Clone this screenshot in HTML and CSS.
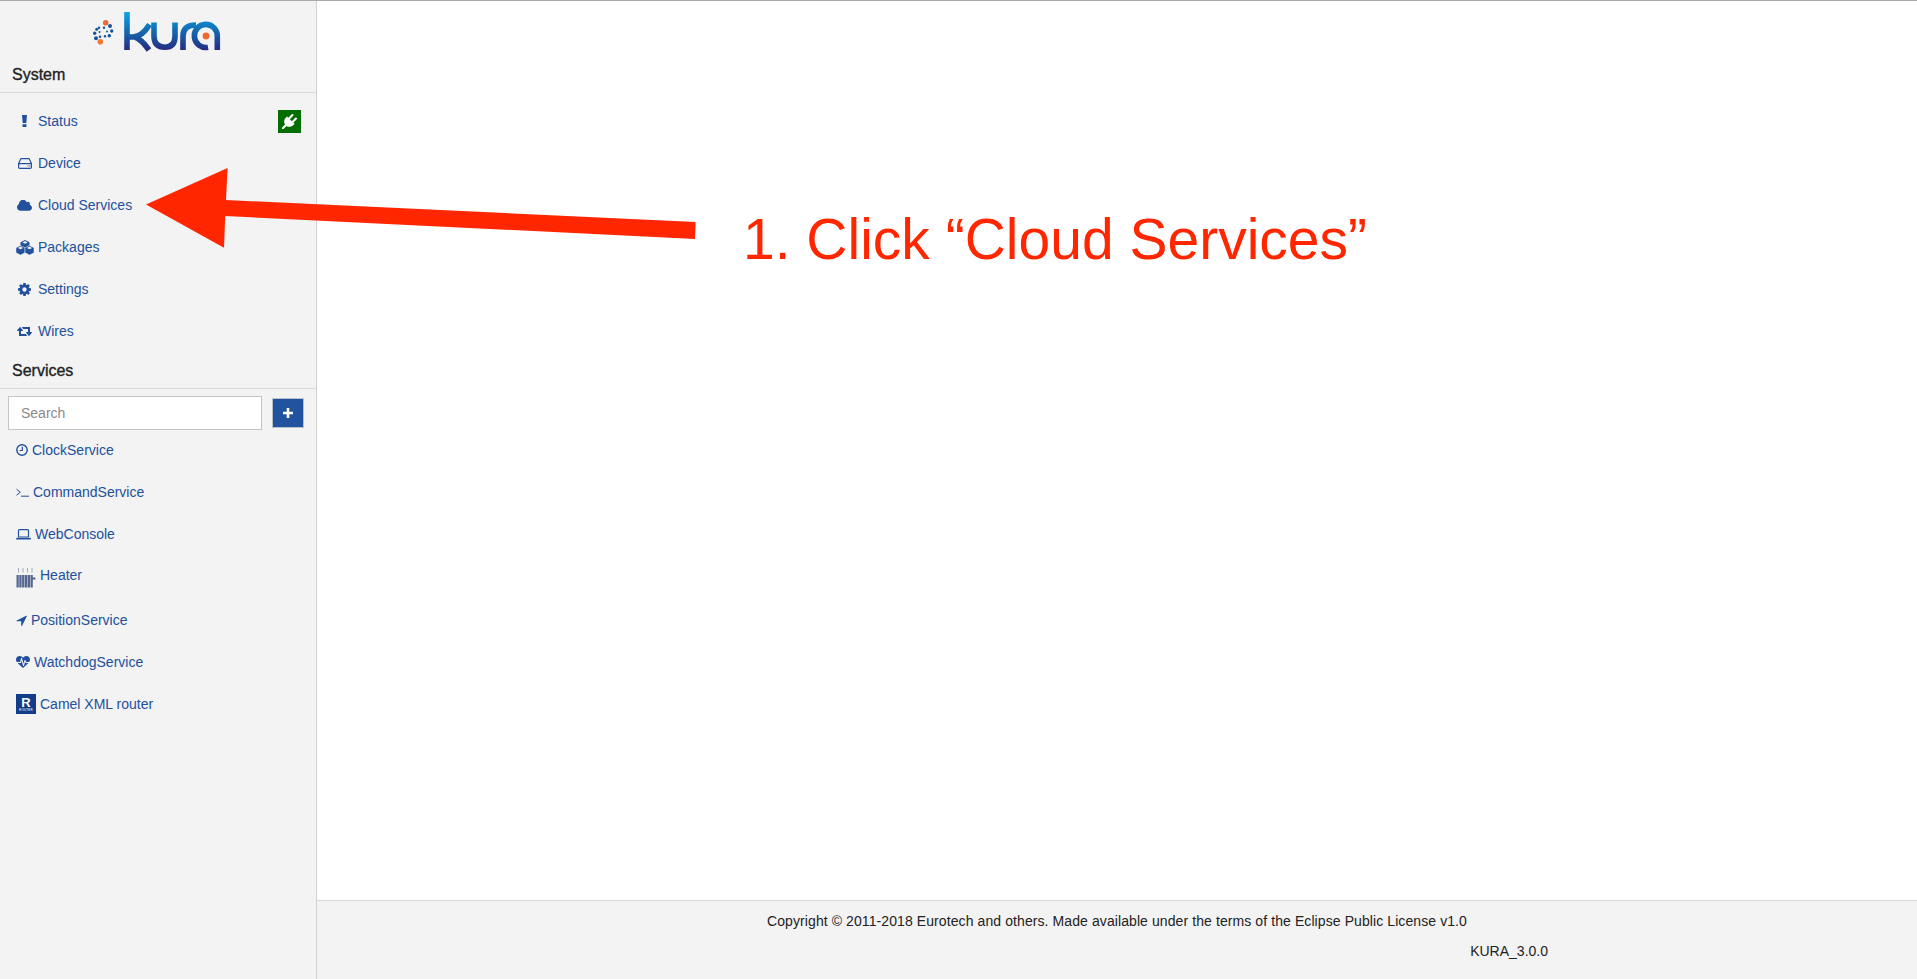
FILE: index.html
```html
<!DOCTYPE html>
<html lang="en">
<head>
<meta charset="utf-8">
<title>Kura</title>
<link rel="stylesheet" href="styles.css">
</head>
<body>
<div class="app">
  <aside class="sidebar">
    <div class="logo">
      <svg class="logo-svg" width="134" height="42" viewBox="90 10 134 42" role="img" aria-label="Kura">
        <defs>
          <linearGradient id="kg" gradientUnits="userSpaceOnUse" x1="0" y1="12" x2="0" y2="50">
            <stop offset="0" stop-color="#0aa5e6"/>
            <stop offset="0.45" stop-color="#136fb6"/>
            <stop offset="1" stop-color="#252c80"/>
          </linearGradient>
        </defs>
        <g fill="none" stroke="url(#kg)" stroke-width="5.6">
          <path d="M127 12V50"/>
          <path d="M128 37H133Q142 37 149.500 24.500"/>
          <path d="M135 37Q141 39 149 50"/>
          <path d="M154 22.500V36Q154 47.200 165 47.200Q175 47.200 175 36V22.500"/>
          <path d="M183 50V36Q183 25 196 25"/>
          <path d="M208 47.200A11.500 11.500 0 1 1 217.300 36.500V50"/>
        </g>
        <circle cx="206" cy="36" r="3.400" fill="#ef6a2a"/>
        <circle cx="105.700" cy="22.700" r="2.800" fill="#ee6a33"/>
        <circle cx="100.300" cy="41.700" r="2.800" fill="#f0792f"/>
        <g fill="#14549f">
          <circle cx="110" cy="26" r="2"/><circle cx="111.700" cy="31" r="1.700"/><circle cx="109.300" cy="35.700" r="1.700"/>
          <circle cx="104" cy="27.700" r="1.200"/><circle cx="99" cy="27.700" r="1.200"/><circle cx="96.700" cy="29.300" r="1.500"/>
          <circle cx="94.700" cy="33.300" r="1.700"/><circle cx="96" cy="38.300" r="2"/><circle cx="100" cy="36.700" r="1.300"/>
          <circle cx="105" cy="36.300" r="1.200"/><circle cx="107" cy="31.500" r="1"/><circle cx="99.500" cy="32" r="1"/>
        </g>
      </svg>
    </div>
    <h2 class="section-head">System</h2>
    <nav class="system-nav">
      <a class="nav-row" href="#">
        <span class="nav-icon"><svg class="ico" width="5" height="12" viewBox="0 0 5 12"><path d="M0 0H5L4.300 8H.7ZM.5 9.300H4.500V12H.5Z"/></svg></span>
        <span>Status</span>
        <span class="badge"><svg class="plug" width="15" height="15" viewBox="0 0 1792 1792"><path d="M1755 453q37 38 37 90.500t-37 90.500l-401 400 150 150-160 160q-163 163-389.500 186.500t-411.500-100.500l-362 362h-181v-181l362-362q-124-185-100.500-411.500t186.500-389.500l160-160 150 150 400-401q38-37 91-37t90 37 37 90.500-37 90.500l-400 401 234 234 401-400q38-37 91-37t90 37z"/></svg></span>
      </a>
      <a class="nav-row" href="#">
        <span class="nav-icon"><svg class="ico-line" width="14" height="11" viewBox="0 0 14 11"><path d="M3 .6H11L13.400 5.500V9.200Q13.400 10.400 12.200 10.400H1.800Q.6 10.400 .6 9.200V5.500ZM.6 5.600H13.400"/><path class="dots" d="M9.500 8H10.500M11.300 8H12.300"/></svg></span>
        <span>Device</span>
      </a>
      <a class="nav-row" href="#">
        <span class="nav-icon"><svg class="ico" width="15" height="11" viewBox="0 128 1920 1344"><path d="M1920 1088q0 159-112.500 271.500t-271.500 112.500h-1088q-185 0-316.500-131.500t-131.500-316.500q0-132 71-241.500t187-163.500q-2-28-2-43 0-212 150-362t362-150q158 0 286.500 88t187.500 230q70-62 166-62 106 0 181 75t75 181q0 75-41 138 129 30 213 134.500t84 239.500z"/></svg></span>
        <span>Cloud Services</span>
      </a>
      <a class="nav-row" href="#">
        <span class="nav-icon"><svg class="ico cubes" width="18" height="15" viewBox="0 0 18 15"><path d="M9 0L13.500 2.200V7.200L9 9.500L4.500 7.200V2.200Z"/><path class="cube" d="M4.500 5.500L9 7.700V12.700L4.500 15L0 12.700V7.700Z"/><path class="cube" d="M13.500 5.500L18 7.700V12.700L13.500 15L9 12.700V7.700Z"/><path class="cut" d="M9 1.100L11.600 2.400L9 3.700L6.400 2.400ZM4.500 6.600L7.100 7.900L4.500 9.200L1.900 7.900ZM13.500 6.600L16.100 7.900L13.500 9.200L10.900 7.900Z"/></svg></span>
        <span>Packages</span>
      </a>
      <a class="nav-row" href="#">
        <span class="nav-icon"><svg class="ico" width="13" height="13" viewBox="0 128 1536 1536"><path d="M1024 896q0-106-75-181t-181-75-181 75-75 181 75 181 181 75 181-75 75-181zm512-109v222q0 12-8 23t-20 13l-185 28q-19 54-39 91 35 50 107 138 10 12 10 25t-9 23q-27 37-99 108t-94 71q-12 0-26-9l-138-108q-44 23-91 38-16 136-29 186-7 28-36 28h-222q-14 0-24.500-8.500t-11.500-21.500l-28-184q-49-16-90-37l-141 107q-10 9-25 9-14 0-25-11-126-114-165-168-7-10-7-23 0-12 8-23 15-21 51-66.500t54-70.500q-27-50-41-99l-183-27q-13-2-21-12.500t-8-23.500v-222q0-12 8-23t19-13l186-28q14-46 39-92-40-57-107-138-10-12-10-24 0-10 9-23 26-36 98.500-107.500t94.500-71.500q13 0 26 10l138 107q44-23 91-38 16-136 29-186 7-28 36-28h222q14 0 24.500 8.500t11.500 21.500l28 184q49 16 90 37l142-107q9-9 24-9 13 0 25 10 129 119 165 170 7 8 7 22 0 12-8 23-15 21-51 66.500t-54 70.500q26 50 41 98l183 28q13 2 21 12.500t8 23.500z"/></svg></span>
        <span>Settings</span>
      </a>
      <a class="nav-row" href="#">
        <span class="nav-icon"><svg class="ico" width="15" height="10" viewBox="0 256 1920 1280"><path d="M1280 1504q0 13-9.500 22.500t-22.500 9.500h-960q-8 0-13.500-2t-9-7-5.500-8-3-11.500-1-11.500v-600h-192q-26 0-45-19t-19-45q0-24 15-41l320-384q19-22 49-22t49 22l320 384q15 17 15 41 0 26-19 45t-45 19h-192v384h576q16 0 25 11l160 192q7 10 7 21zm640-416q0 24-15 41l-320 384q-20 23-49 23t-49-23l-320-384q-15-17-15-41 0-26 19-45t45-19h192v-384h-576q-16 0-25-12l-160-192q-7-9-7-20 0-13 9.500-22.500t22.500-9.500h960q8 0 13.500 2t9 7 5.500 8 3 11.500 1 11.500v600h192q26 0 45 19t19 45z"/></svg></span>
        <span>Wires</span>
      </a>
    </nav>
    <h2 class="section-head">Services</h2>
    <div class="search-row">
      <input class="search" type="text" placeholder="Search">
      <button class="add" type="button" aria-label="Add"><svg class="add-icon" width="10" height="10" viewBox="0 0 10 10"><path d="M3.700 0H6.300V3.700H10V6.300H6.300V10H3.700V6.300H0V3.700H3.700Z"/></svg></button>
    </div>
    <nav class="service-nav">
      <a class="service-row" href="#">
        <svg class="ico-line" width="12" height="12" viewBox="0 0 12 12"><circle cx="6" cy="6" r="5.200" stroke-width="1.400"/><path d="M6.300 2.800V6.500H3.500" stroke-width="1.200"/></svg>
        <span>ClockService</span>
      </a>
      <a class="service-row" href="#">
        <svg class="ico-line" width="13" height="10" viewBox="0 0 13 10"><path d="M.5 2.200L4.300 5.200L.5 8.200M5 9.200H13" stroke-width="1"/></svg>
        <span>CommandService</span>
      </a>
      <a class="service-row" href="#">
        <svg class="ico-line" width="15" height="11" viewBox="0 0 15 11"><path d="M2.500 8V1.600Q2.500 .7 3.400 .7H11.600Q12.500 .7 12.500 1.600V8Z"/><path d="M.2 9.700H14.800" stroke-width="1.600"/></svg>
        <span>WebConsole</span>
      </a>
      <a class="service-row tall" href="#">
        <svg class="heater" width="20" height="20" viewBox="0 0 20 20"><path class="steam" d="M2.500 0V4.500M7 0V4.500M11.500 0V4.500M16 0V4.500"/><path d="M.5 7H2.800V19.500H.5ZM3.300 7H5.600V19.500H3.300ZM6.100 7H8.400V19.500H6.100ZM8.900 7H11.200V19.500H8.900ZM11.700 7H14V19.500H11.700ZM14.500 7H16.800V19.500H14.500ZM16.800 9.500H19.500V11.500H16.800Z"/></svg>
        <span class="heater-label">Heater</span>
      </a>
      <a class="service-row" href="#">
        <svg class="ico" width="11" height="11" viewBox="130 170 1480 1500"><path d="M1593 349l-640 1280q-17 35-57 35-5 0-15-2-22-5-35.500-22.500t-13.500-39.500v-576h-576q-22 0-39.500-13.500t-22.500-35.500 4-42 29-30l1280-640q13-7 29-7 27 0 45 19 15 14 18.500 34.500t-6.500 39.500z"/></svg>
        <span>PositionService</span>
      </a>
      <a class="service-row" href="#">
        <svg class="ico" width="14" height="12" viewBox="0 128 1792 1536"><path d="M1280 1024h305q-5 6-10 10.500t-9 7.500l-3 4-623 600q-18 18-44 18t-44-18l-624-602q-5-2-21-20h369q22 0 39.500-13.500t22.500-34.500l70-281 190 667q6 20 23 33t39 13q21 0 38-13t23-33l146-485 56 112q18 35 57 35zm512-428q0 145-103 300h-369l-111-221q-8-17-25.500-27t-36.500-8q-45 5-56 46l-129 430-196-686q-6-20-23.500-33t-39.500-13-39 13.500-22 34.500l-116 464h-423q-103-155-103-300 0-220 127-344t351-124q62 0 126.500 21.500t120 58 95.500 68.500 76 68q36-36 76-68t95.500-68.500 120-58 126.500-21.500q224 0 351 124t127 344z"/></svg>
        <span>WatchdogService</span>
      </a>
      <a class="service-row" href="#">
        <span class="camel"><span class="camel-r">R</span><span class="camel-sub">ROUTER</span></span>
        <span>Camel XML router</span>
      </a>
    </nav>
  </aside>
  <main class="main">
    <div class="content"></div>
    <footer class="footer">
      <div class="copyright">Copyright © 2011-2018 Eurotech and others. Made available under the terms of the Eclipse Public License v1.0</div>
      <div class="version">KURA_3.0.0</div>
    </footer>
  </main>
</div>
<svg class="arrow" width="560" height="90" viewBox="140 165 560 90"><path d="M146 204.500L227.600 168L226 200L695.600 222L695 239L225.200 216L224 247.700Z"/></svg>
<div class="callout">1. Click “Cloud Services”</div>
</body>
</html>
```
FILE: styles.css
```css
* { box-sizing: border-box; }
html, body { height: 100%; }
body {
  margin: 0;
  border-top: 1px solid #a9a9a9;
  font-family: "Liberation Sans", Arial, sans-serif;
  font-size: 14px;
  color: #222;
  background: #fff;
  overflow: hidden;
  position: relative;
}
.app { display: flex; height: 100%; }
.sidebar {
  width: 317px;
  flex: none;
  background: #f3f3f3;
  border-right: 1px solid #d2d2d2;
}
.logo { height: 55px; padding: 9px 0 0 90px; }
.logo-svg { display: block; }
.section-head {
  margin: 0;
  height: 37px;
  padding: 2px 0 0 12px;
  display: flex;
  align-items: center;
  font-size: 16px;
  font-weight: 400;
  color: #222;
  -webkit-text-stroke: 0.35px #222;
  border-bottom: 1px solid #d8d8d8;
}
.system-nav { padding-top: 7px; }
a { color: #22509d; text-decoration: none; }
.nav-row {
  display: flex;
  align-items: center;
  height: 42px;
  padding-left: 14px;
  padding-right: 15px;
}
.nav-icon {
  width: 21px;
  margin-right: 3px;
  display: flex;
  justify-content: center;
  align-items: center;
}
.ico { fill: currentColor; display: block; flex: none; }
.ico-line { fill: none; stroke: currentColor; stroke-width: 1.2; display: block; flex: none; }
.cube { stroke: #f3f3f3; stroke-width: 0.5; }
.cut { fill: #f3f3f3; }
.badge {
  margin-left: auto;
  width: 23px;
  height: 23px;
  background: #006f00;
  display: flex;
  align-items: center;
  justify-content: center;
}
.plug { fill: #fff; display: block; }
.search-row {
  display: flex;
  align-items: center;
  gap: 10px;
  padding: 7px 12px 0 8px;
}
.search {
  flex: 1;
  min-width: 0;
  height: 34px;
  padding: 0 12px;
  border: 1px solid #c4c4c4;
  border-radius: 0;
  background: #fff;
  font: 14px "Liberation Sans", Arial, sans-serif;
  outline: none;
}
.search::placeholder { color: #8a8a8a; opacity: 1; }
.add {
  width: 32px;
  height: 30px;
  padding: 0;
  background: #22539f;
  border: 1px solid #b9c0cb;
  display: flex;
  align-items: center;
  justify-content: center;
}
.add-icon { fill: #fff; display: block; }
.service-nav { display: flex; flex-direction: column; gap: 2px; }
.service-row {
  display: flex;
  align-items: center;
  gap: 4px;
  height: 40px;
  padding-left: 16px;
}
.service-row.tall { height: 42px; }
.heater { display: block; flex: none; fill: #56678f; margin-top: 2px; }
.steam { fill: none; stroke: #8d97ad; stroke-width: 0.8; }
.heater-label { margin-bottom: 4px; }
.camel {
  width: 20px;
  height: 20px;
  background: #123b88;
  color: #fff;
  display: flex;
  flex-direction: column;
  align-items: center;
  line-height: 1;
  flex: none;
  padding-top: 3px;
}
.camel-r { font-size: 13px; font-weight: 700; line-height: 11px; }
.camel-sub { font-size: 3px; margin-top: 1px; letter-spacing: 0.2px; }
.main { flex: 1; display: flex; flex-direction: column; min-width: 0; }
.content { flex: 1; }
.footer {
  height: 79px;
  flex: none;
  background: #f3f3f3;
  border-top: 1px solid #d8d8d8;
  font-size: 14px;
  color: #222;
}
.copyright { text-align: center; margin-top: 12px; line-height: 16px; letter-spacing: 0.09px; }
.version { text-align: right; padding-right: 369px; margin-top: 14px; line-height: 16px; }
.arrow { position: absolute; left: 140px; top: 164px; fill: #ff2600; pointer-events: none; }
.callout {
  position: absolute;
  left: 743px;
  top: 206px;
  font-size: 57px;
  line-height: 65px;
  color: #ff2600;
  white-space: nowrap;
}
```
